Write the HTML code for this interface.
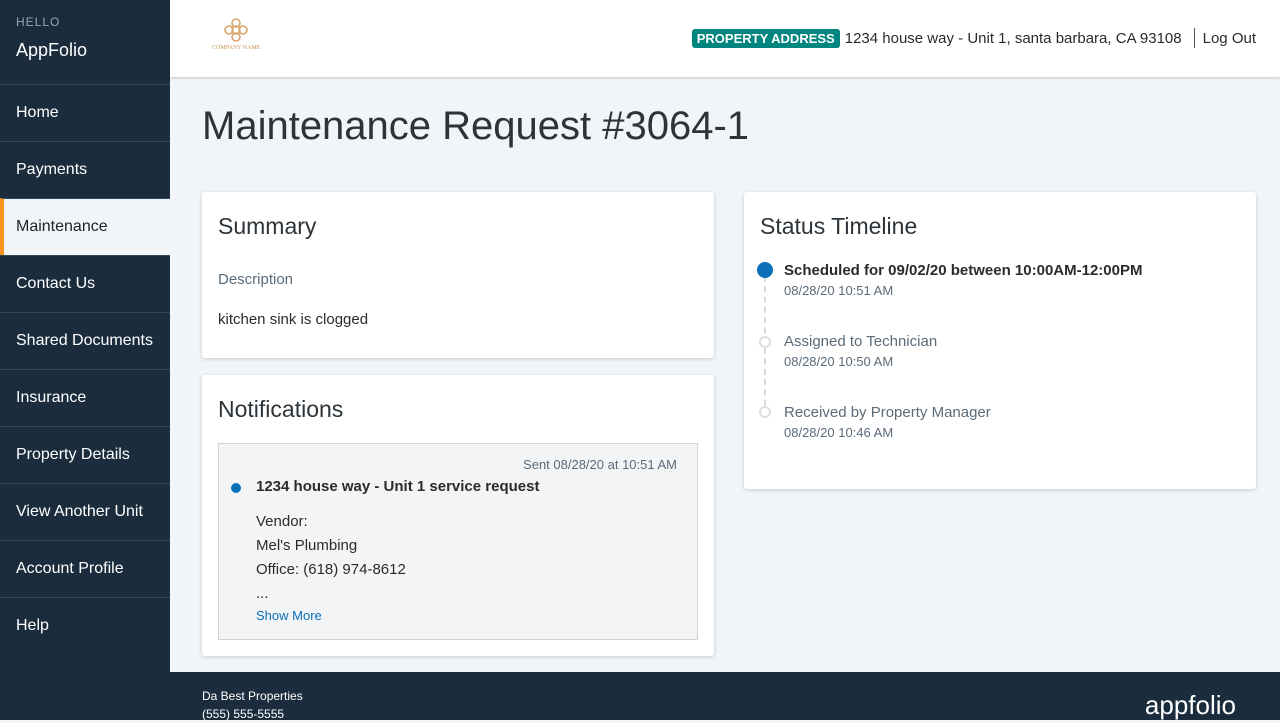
<!DOCTYPE html>
<html><head><meta charset="utf-8"><style>
*{box-sizing:border-box;margin:0;padding:0}
body{width:1280px;height:720px;overflow:hidden;font-family:"Liberation Sans",sans-serif;background:#f1f5f8;position:relative;color:#2b2b2b}
.side{position:absolute;left:0;top:0;width:170px;height:720px;background:#1b2d3d;color:#fff}
.hello{position:absolute;left:16px;top:15px;font-size:12px;letter-spacing:1px;color:#9aa6b1}
.app{position:absolute;left:16px;top:40px;font-size:18px}
.nav{position:absolute;left:0;top:84px;width:170px}
.nav div{height:57px;border-top:1px solid #33475a;padding-left:16px;line-height:56px;font-size:16px}
.nav div.act{background:#f1f5f8;color:#222;border-left:4px solid #f7931e;padding-left:12px}
.top{position:absolute;left:170px;top:0;width:1110px;height:77px;background:#fff;box-shadow:0 1px 3px rgba(0,0,0,.2)}
.addr{position:absolute;right:24px;top:28px;font-size:15px;display:flex;align-items:center}
.badge{background:#00857f;color:#fff;font-weight:bold;font-size:13px;padding:2px 5px;border-radius:3px;margin-right:5px}
.sep{width:1px;height:20px;background:#555;margin:0 8px 0 12px}
h1{position:absolute;left:202px;top:104px;font-weight:normal;font-size:40px;color:#2d3439}
.card{position:absolute;background:#fff;border-radius:3px;box-shadow:0 1px 4px rgba(0,0,0,.18)}
.card h2{font-weight:normal;font-size:23px;color:#2d3439;position:absolute;left:16px;top:21px}
.foot{position:absolute;left:170px;top:672px;width:1110px;height:48px;background:#1b2d3d;color:#fff;font-size:12px}
.tl{position:absolute;left:40px;font-size:15px;color:#5b6b7a}
.tl small{display:block;font-size:13px;margin-top:4px}
</style></head><body>
<div class="side"><div class="hello">HELLO</div><div class="app">AppFolio</div>
<div class="nav"><div>Home</div><div>Payments</div><div class="act">Maintenance</div><div>Contact Us</div><div>Shared Documents</div><div>Insurance</div><div>Property Details</div><div>View Another Unit</div><div>Account Profile</div><div>Help</div></div></div>
<div class="top">
<svg style="position:absolute;left:54px;top:18px" width="24" height="24" viewBox="0 0 24 24" fill="none" stroke="#d9a46b" stroke-width="1.6"><circle cx="12" cy="12" r="4"/><circle cx="12" cy="5" r="4"/><circle cx="12" cy="19" r="4"/><circle cx="5" cy="12" r="4"/><circle cx="19" cy="12" r="4"/></svg>
<div style="position:absolute;left:42px;top:45px;font-size:6px;color:#c9945e;font-family:'Liberation Serif',serif">COMPANY NAME</div>
<div class="addr"><span class="badge">PROPERTY ADDRESS</span>1234 house way - Unit 1, santa barbara, CA 93108<span class="sep"></span>Log Out</div></div>
<h1>Maintenance Request #3064-1</h1>
<div class="card" style="left:202px;top:192px;width:512px;height:166px"><h2>Summary</h2>
<div style="position:absolute;left:16px;top:79px;font-size:15px;color:#5b6b7a">Description</div>
<div style="position:absolute;left:16px;top:312px;"></div>
<div style="position:absolute;left:16px;top:119px;font-size:15px">kitchen sink is clogged</div></div>
<div class="card" style="left:202px;top:375px;width:512px;height:281px"><h2>Notifications</h2>
<div style="position:absolute;left:16px;top:68px;width:480px;height:197px;background:#f3f4f6;border:1px solid #d0d4d8;font-size:15px">
<div style="position:absolute;right:20px;top:13px;font-size:13px;color:#5b6b7a">Sent 08/28/20 at 10:51 AM</div>
<div style="position:absolute;left:12px;top:39px;width:10px;height:10px;border-radius:50%;background:#0b6fb8"></div>
<div style="position:absolute;left:37px;top:34px;font-weight:bold">1234 house way - Unit 1 service request</div>
<div style="position:absolute;left:37px;top:66px;line-height:24px">Vendor:<br>Mel's Plumbing<br>Office: (618) 974-8612<br>...</div>
<div style="position:absolute;left:37px;top:164px;font-size:13px;color:#0b6fb8">Show More</div></div></div>
<div class="card" style="left:744px;top:192px;width:512px;height:297px"><h2>Status Timeline</h2>
<div style="position:absolute;left:20px;top:84px;height:140px;border-left:2px dashed #d6d9dc"></div>
<div style="position:absolute;left:13px;top:70px;width:16px;height:16px;border-radius:50%;background:#0b6fb8"></div>
<div style="position:absolute;left:15px;top:144px;width:12px;height:12px;border-radius:50%;background:#fff;border:2px solid #dcdfe2"></div>
<div style="position:absolute;left:15px;top:214px;width:12px;height:12px;border-radius:50%;background:#fff;border:2px solid #dcdfe2"></div>
<div class="tl" style="top:70px;color:#2b2b2b;font-weight:bold">Scheduled for 09/02/20 between 10:00AM-12:00PM<small style="font-weight:normal;color:#5b6b7a">08/28/20 10:51 AM</small></div>
<div class="tl" style="top:141px">Assigned to Technician<small>08/28/20 10:50 AM</small></div>
<div class="tl" style="top:212px">Received by Property Manager<small>08/28/20 10:46 AM</small></div></div>
<div class="foot"><div style="position:absolute;left:32px;top:15px;line-height:18px">Da Best Properties<br>(555) 555-5555</div>
<div style="position:absolute;right:44px;top:18px;font-size:26px;line-height:30px">appfolio</div></div>
</body></html>
